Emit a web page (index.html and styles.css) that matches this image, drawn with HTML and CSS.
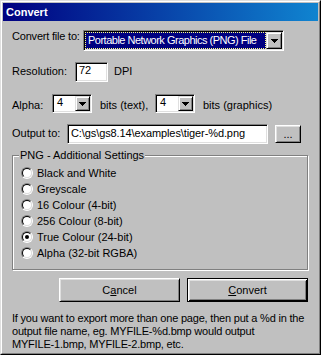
FILE: index.html
```html
<!DOCTYPE html>
<html lang="en">
<head>
    <meta charset="UTF-8">
    <title>Convert</title>
    <link rel="stylesheet" href="styles.css">
</head>
<body>
    <div class="window">
        <div class="frame">
            <!-- Title bar -->
            <div class="titlebar">Convert</div>

            <div class="content">
                <!-- File type -->
                <div class="row row-type">
                    <label class="lbl lbl-type">Convert file to:</label>
                    <div class="combo combo-wide">
                        <div class="combo-text">
                            <span class="combo-sel">Portable Network Graphics (PNG) File</span>
                        </div>
                        <span class="drop-btn">
                            <svg width="7" height="4" viewBox="0 0 7 4"><path d="M0 0h7v1H0zM1 1h5v1H1zM2 2h3v1H2zM3 3h1v1H3z" fill="#000"/></svg>
                        </span>
                    </div>
                </div>

                <!-- Resolution -->
                <div class="row row-res">
                    <label class="lbl lbl-res">Resolution:</label>
                    <div class="field field-res">72</div>
                    <span class="lbl unit">DPI</span>
                </div>

                <!-- Alpha bits -->
                <div class="row row-alpha">
                    <label class="lbl lbl-alpha">Alpha:</label>
                    <div class="combo combo-small">
                        <div class="combo-text"><span class="combo-val">4</span></div>
                        <span class="drop-btn">
                            <svg width="7" height="4" viewBox="0 0 7 4"><path d="M0 0h7v1H0zM1 1h5v1H1zM2 2h3v1H2zM3 3h1v1H3z" fill="#000"/></svg>
                        </span>
                    </div>
                    <span class="lbl bits-text">bits (text),</span>
                    <div class="combo combo-small">
                        <div class="combo-text"><span class="combo-val">4</span></div>
                        <span class="drop-btn">
                            <svg width="7" height="4" viewBox="0 0 7 4"><path d="M0 0h7v1H0zM1 1h5v1H1zM2 2h3v1H2zM3 3h1v1H3z" fill="#000"/></svg>
                        </span>
                    </div>
                    <span class="lbl bits-gfx">bits (graphics)</span>
                </div>

                <!-- Output file -->
                <div class="row row-out">
                    <label class="lbl lbl-out">Output to:</label>
                    <div class="field field-out">C:\gs\gs8.14\examples\tiger-%d.png</div>
                    <div class="button btn-browse">...</div>
                </div>

                <!-- PNG settings -->
                <div class="group">
                    <span class="legend">PNG - Additional Settings</span>
                    <div class="radio-row"><span class="radio"></span><span>Black and White</span></div>
                    <div class="radio-row"><span class="radio"></span><span>Greyscale</span></div>
                    <div class="radio-row"><span class="radio"></span><span>16 Colour (4-bit)</span></div>
                    <div class="radio-row"><span class="radio"></span><span>256 Colour (8-bit)</span></div>
                    <div class="radio-row"><span class="radio checked"></span><span>True Colour (24-bit)</span></div>
                    <div class="radio-row"><span class="radio"></span><span>Alpha (32-bit RGBA)</span></div>
                </div>

                <!-- Actions -->
                <div class="actions">
                    <div class="button btn-action">C<u>a</u>ncel</div>
                    <div class="button btn-action btn-default"><u>C</u>onvert</div>
                </div>

                <p class="help">If you want to export more than one page, then put a %d in the<br>output file name, eg. MYFILE-%d.bmp would output<br>MYFILE-1.bmp, MYFILE-2.bmp, etc.</p>
            </div>
        </div>
    </div>
</body>
</html>
```

FILE: styles.css
```css
body {
    margin: 0;
    background-color: #c0c0c0;
    color: #000;
    font-family: 'Liberation Sans', Arial, sans-serif;
    font-size: 11px;
    line-height: 13px;
}

/* Window frame */
.window {
    width: 321px;
    height: 355px;
    box-sizing: border-box;
    border: 1px solid;
    border-color: #dfdfdf #000 #000 #dfdfdf;
    background-color: #c0c0c0;
}

.frame {
    height: 100%;
    box-sizing: border-box;
    border: 1px solid;
    border-color: #fff #808080 #808080 #fff;
    padding: 1px;
}

.titlebar {
    height: 18px;
    line-height: 18px;
    padding-left: 3px;
    background: linear-gradient(to right, #000080, #1084d0);
    color: #fff;
    font-weight: bold;
}

.content {
    padding: 9px 0 0 9px;
}

/* Rows */
.row {
    display: flex;
    align-items: flex-start;
}

.lbl {
    white-space: nowrap;
}

.row-type {
    height: 21px;
}

.lbl-type {
    width: 71px;
    letter-spacing: -0.2px;
}

.row-res {
    margin-top: 11px;
    height: 20px;
}

.row-res .lbl {
    padding-top: 3px;
}

.lbl-res {
    width: 63px;
}

.unit {
    margin-left: 6px;
}

.row-alpha {
    margin-top: 12px;
    height: 19px;
}

.row-alpha .lbl {
    padding-top: 5px;
}

.lbl-alpha {
    width: 40px;
}

.bits-text {
    width: 55px;
    margin-left: 8px;
}

.bits-gfx {
    margin-left: 8px;
}

.row-out {
    margin-top: 11px;
    height: 20px;
}

.lbl-out {
    width: 55px;
    padding-top: 3px;
}

/* Sunken controls */
.field,
.combo {
    box-sizing: border-box;
    border: 1px solid;
    border-color: #808080 #fff #fff #808080;
    box-shadow: inset 1px 1px #000, inset -1px -1px #dfdfdf;
    background-color: #fff;
}

.field {
    padding: 1px 3px;
    white-space: nowrap;
    overflow: hidden;
}

.field-res {
    width: 33px;
    height: 20px;
    padding-top: 1px;
}

.field-out {
    width: 201px;
    height: 20px;
    padding-top: 2px;
    letter-spacing: -0.1px;
}

.combo {
    display: flex;
    padding: 1px;
}

.combo-text {
    flex: 1;
    overflow: hidden;
    white-space: nowrap;
}

.combo-wide {
    width: 201px;
    height: 21px;
}

.combo-sel {
    display: block;
    height: 100%;
    box-sizing: border-box;
    padding: 1px 0 0 2px;
    border: 1px dotted #ffff80;
    background-color: #000080;
    color: #fff;
    letter-spacing: -0.5px;
    overflow: hidden;
}

.combo-small {
    width: 40px;
    height: 19px;
}

.combo-val {
    display: block;
    padding-left: 3px;
}

.drop-btn {
    width: 16px;
    box-sizing: border-box;
    display: flex;
    align-items: center;
    justify-content: center;
    border: 1px solid;
    border-color: #dfdfdf #000 #000 #dfdfdf;
    box-shadow: inset 1px 1px #fff, inset -1px -1px #808080;
    background-color: #c0c0c0;
}

.combo-small .drop-btn {
    width: 15px;
}

.drop-btn svg {
    display: block;
}

/* Raised buttons */
.button {
    box-sizing: border-box;
    display: flex;
    align-items: center;
    justify-content: center;
    border: 1px solid;
    border-color: #fff #000 #000 #fff;
    box-shadow: inset 1px 1px #dfdfdf, inset -1px -1px #808080;
    background-color: #c0c0c0;
}

.btn-browse {
    width: 26px;
    height: 18px;
    margin-top: 1px;
    margin-left: 7px;
}

/* Group box */
.group {
    position: relative;
    width: 296px;
    height: 115px;
    margin-top: 11px;
    box-sizing: border-box;
    padding: 9px 0 0 8px;
    border: 1px solid #808080;
    box-shadow: inset 1px 1px #fff, 1px 1px #fff;
}

.legend {
    position: absolute;
    top: -7px;
    left: 6px;
    padding: 0 1px;
    background-color: #c0c0c0;
}

.radio-row {
    display: flex;
    align-items: center;
    height: 16px;
}

.radio {
    position: relative;
    width: 12px;
    height: 12px;
    margin-right: 4px;
    box-sizing: border-box;
    border: 1px solid;
    border-color: #808080 #fff #fff #808080;
    border-radius: 50%;
}

.radio::before {
    content: "";
    position: absolute;
    inset: 0;
    border: 1px solid;
    border-color: #000 #dfdfdf #dfdfdf #000;
    border-radius: 50%;
    background-color: #fff;
}

.radio.checked::after {
    content: "";
    position: absolute;
    top: 3px;
    left: 3px;
    width: 4px;
    height: 4px;
    border-radius: 50%;
    background-color: #000;
}

/* Buttons row */
.actions {
    display: flex;
    justify-content: flex-end;
    gap: 7px;
    margin-top: 8px;
    padding-right: 10px;
}

.btn-action {
    width: 121px;
    height: 24px;
}

.btn-default {
    border-color: #000;
    box-shadow: inset 1px 1px #fff, inset -1px -1px #000, inset 2px 2px #dfdfdf, inset -2px -2px #808080;
}

.help {
    margin: 10px 0 0;
    letter-spacing: -0.2px;
}
```
